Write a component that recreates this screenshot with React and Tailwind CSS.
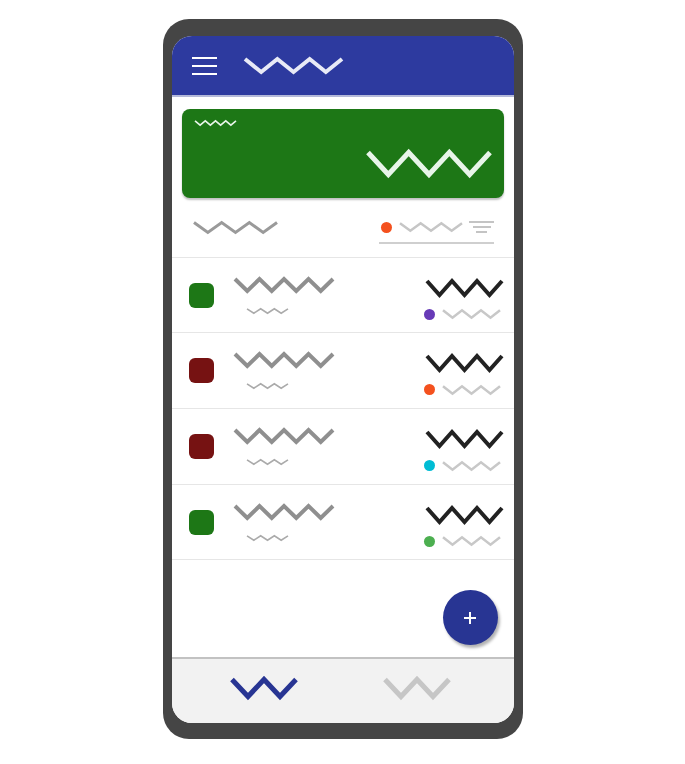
import React from "react";

// Zigzag strokes stand in for text in this wireframe mockup.
function Zig({ w, h, n, sw, color, className = "" }) {
  const pts = [];
  for (let i = 0; i <= 2 * n; i++) {
    const x = (i * w) / (2 * n);
    const y = i % 2 ? h - sw / 2 : sw / 2;
    pts.push(`${x},${y}`);
  }
  return (
    <svg width={w} height={h} viewBox={`0 0 ${w} ${h}`} className={`shrink-0 overflow-visible ${className}`} aria-hidden="true">
      <polyline points={pts.join(" ")} fill="none" stroke={color} strokeWidth={sw} strokeLinejoin="miter" />
    </svg>
  );
}

const rows = [
  { square: "bg-[#1d7716]", dot: "bg-[#673ab7]", h: "h-[75px]" },
  { square: "bg-[#761212]", dot: "bg-[#f4511e]", h: "h-[76px]" },
  { square: "bg-[#761212]", dot: "bg-[#00bcd4]", h: "h-[76px]" },
  { square: "bg-[#1d7716]", dot: "bg-[#4caf50]", h: "h-[75px]" },
];

export default function App() {
  return (
    <div className="min-h-[764px] bg-white pt-[19px]">
      <div className="mx-auto h-[720px] w-[360px] rounded-[26px] bg-[#454545] px-[9px] pb-[16px] pt-[17px]">
        <div className="relative flex h-full flex-col overflow-hidden rounded-[20px] bg-white">
          <header className="flex h-[61px] shrink-0 items-center gap-[28px] border-b-2 border-[#b4b9d9] bg-[#2d3a9f] pl-5">
            <div className="flex w-[25px] flex-col gap-[6px]">
              <span className="h-[2px] bg-white" />
              <span className="h-[2px] bg-white" />
              <span className="h-[2px] bg-white" />
            </div>
            <Zig w={97} h={17} n={3} sw={4} color="#e8eaf6" />
          </header>

          <div className="mx-[10px] mt-3 flex h-[89px] flex-col rounded-lg bg-[#1d7716] pb-[21px] pl-[13px] pr-[14px] pt-[11px] shadow-[0_2px_2px_rgba(0,0,0,0.25)]">
            <Zig w={41} h={6} n={4} sw={1.6} color="#e8f5e9" />
            <Zig w={122} h={27} n={3} sw={5} color="#e8f5e9" className="mt-auto self-end" />
          </div>

          <div className="flex h-[60px] shrink-0 items-center justify-between border-b border-[#e6e6e6] pl-[22px] pr-5">
            <Zig w={83} h={13} n={3} sw={3} color="#9a9a9a" />
            <div className="mt-[10px] flex items-center border-b-2 border-[#cfcfcf] pb-[9px] pl-[2px]">
              <span className="h-[11px] w-[11px] rounded-full bg-[#f4511e]" />
              <Zig w={62} h={10} n={3} sw={2.5} color="#c6c6c6" className="ml-2" />
              <svg width="25" height="12" viewBox="0 0 25 12" className="ml-[7px]" aria-hidden="true">
                <g stroke="#c4c4c4" strokeWidth="2">
                  <line x1="0" y1="1" x2="25" y2="1" />
                  <line x1="4" y1="6" x2="22" y2="6" />
                  <line x1="7" y1="11" x2="18" y2="11" />
                </g>
              </svg>
            </div>
          </div>

          {rows.map((r, i) => (
            <div key={i} className={`flex shrink-0 items-center border-b border-[#e6e6e6] pl-[17px] pr-3 ${r.h}`}>
              <span className={`h-[25px] w-[25px] rounded-md ${r.square}`} />
              <div className="ml-[21px] flex flex-col">
                <Zig w={98} h={16} n={4} sw={4} color="#8f8f8f" />
                <Zig w={41} h={6} n={3} sw={1.6} color="#ababab" className="ml-3 mt-[15px]" />
              </div>
              <div className="ml-auto mt-[8px] flex flex-col items-end">
                <Zig w={75} h={18} n={3} sw={4} color="#222222" />
                <div className="mr-[2px] mt-[12px] flex items-center">
                  <span className={`h-[11px] w-[11px] rounded-full ${r.dot}`} />
                  <Zig w={57} h={10} n={3} sw={2.5} color="#c8c8c8" className="ml-2" />
                </div>
              </div>
            </div>
          ))}

          <button className="absolute bottom-[78px] right-4 grid h-[55px] w-[55px] place-items-center rounded-full bg-[#283593] shadow-[2px_3px_3px_rgba(0,0,0,0.3)]">
            <svg width="12" height="12" viewBox="0 0 12 12" aria-hidden="true">
              <path d="M6 0v12M0 6h12" stroke="white" strokeWidth="2" />
            </svg>
          </button>

          <nav className="mt-auto flex h-[66px] shrink-0 items-center justify-center gap-[89px] border-t-2 border-[#c2c2c2] bg-[#f2f2f2] pb-[6px] pr-[5px]">
            <Zig w={64} h={22} n={2} sw={5} color="#283593" />
            <Zig w={64} h={22} n={2} sw={5} color="#c6c6c6" />
          </nav>
        </div>
      </div>
    </div>
  );
}
